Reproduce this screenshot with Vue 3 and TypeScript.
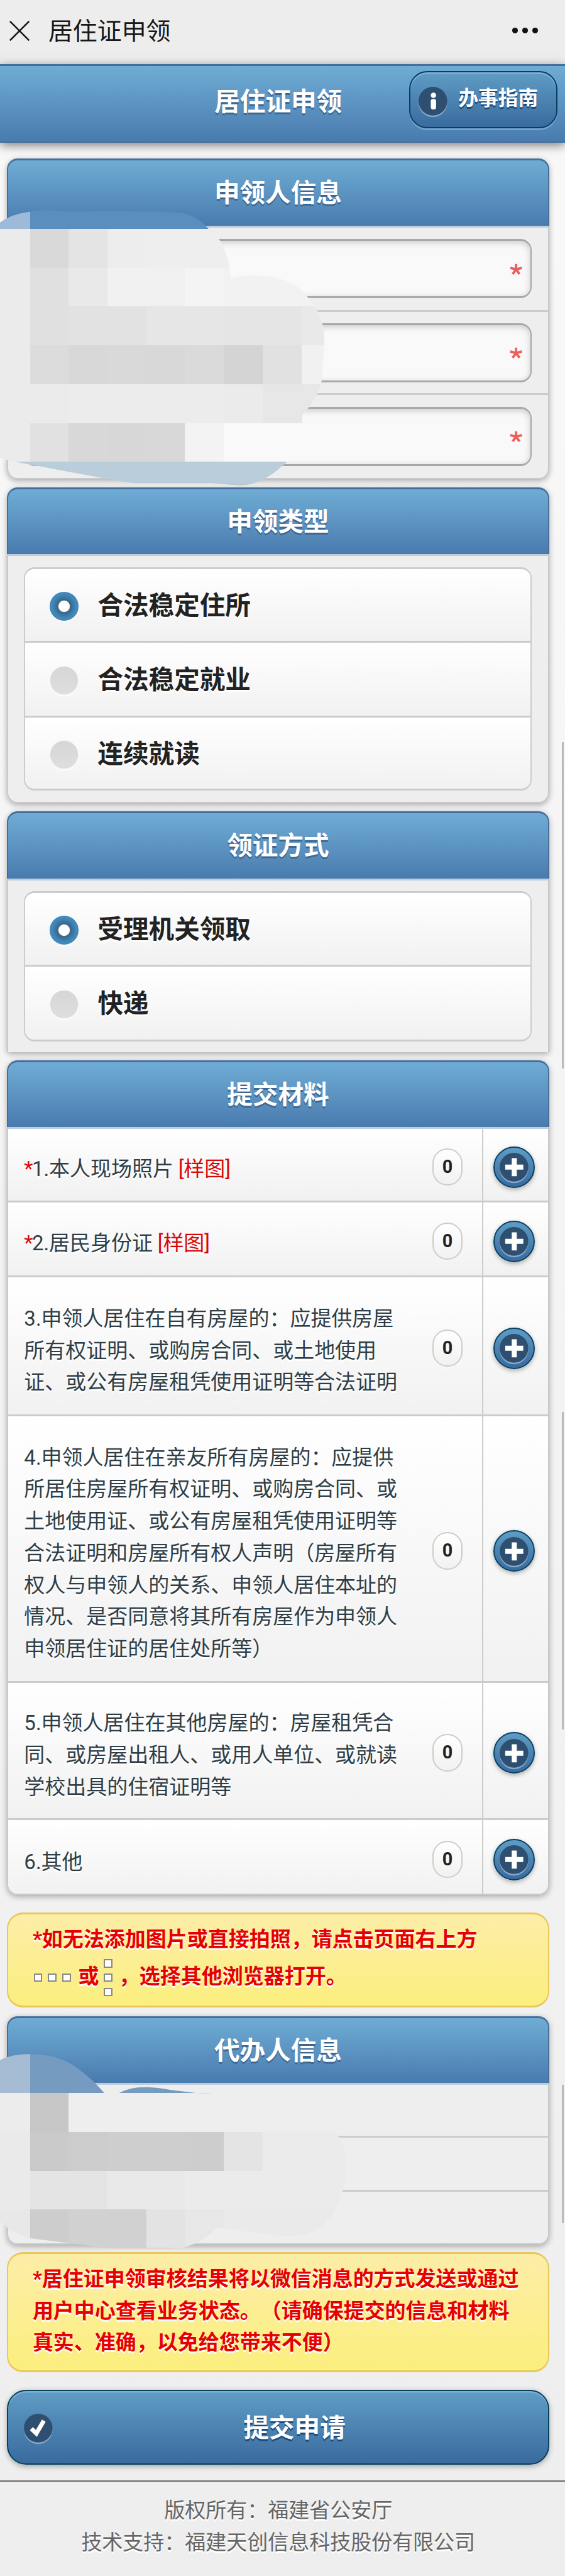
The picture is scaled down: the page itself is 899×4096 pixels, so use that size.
<script setup lang="ts">
import { ref } from 'vue'

interface Material {
  required: boolean
  lines: string[]
  sample: boolean
  count: number
  size: string
}

interface Cell {
  x: number
  y: number
  w: number
  fill: string
}

const applyTypes: string[] = ['合法稳定住所', '合法稳定就业', '连续就读']
const pickupWays: string[] = ['受理机关领取', '快递']
const applyType = ref(0)
const pickupWay = ref(0)

const materials = ref<Material[]>([
  { required: true, lines: ['1.本人现场照片'], sample: true, count: 0, size: 'single' },
  { required: true, lines: ['2.居民身份证'], sample: true, count: 0, size: 'single-tall' },
  {
    required: false,
    lines: ['3.申领人居住在自有房屋的：应提供房屋', '所有权证明、或购房合同、或土地使用', '证、或公有房屋租凭使用证明等合法证明'],
    sample: false,
    count: 0,
    size: 'triple-tall',
  },
  {
    required: false,
    lines: [
      '4.申领人居住在亲友所有房屋的：应提供',
      '所居住房屋所有权证明、或购房合同、或',
      '土地使用证、或公有房屋租凭使用证明等',
      '合法证明和房屋所有权人声明（房屋所有',
      '权人与申领人的关系、申领人居住本址的',
      '情况、是否同意将其所有房屋作为申领人',
      '申领居住证的居住处所等）',
    ],
    sample: false,
    count: 0,
    size: 'long',
  },
  {
    required: false,
    lines: ['5.申领人居住在其他房屋的：房屋租凭合', '同、或房屋出租人、或用人单位、或就读', '学校出具的住宿证明等'],
    sample: false,
    count: 0,
    size: 'triple',
  },
  { required: false, lines: ['6.其他'], sample: false, count: 0, size: 'single' },
])

const resultNotice: string[] = [
  '*居住证申领审核结果将以微信消息的方式发送或通过',
  '用户中心查看业务状态。（请确保提交的信息和材料',
  '真实、准确，以免给您带来不便）',
]

const COLS = [0, 56.3, 129, 202, 275, 348, 421, 494, 567, 680]

function toCells(rows: string[], top: number): Cell[] {
  return rows.flatMap((row, r) => {
    const tones = row.split(' ')
    return tones.map((tone, c) => ({
      x: COLS[c],
      y: top + r * 73,
      w: (c === tones.length - 1 ? 680 : COLS[c + 1]) - COLS[c],
      fill: '#' + tone + tone + tone,
    }))
  })
}

const applicantMask = toCells(
  [
    'eb d9 e4 ed ee',
    'eb e0 e9 f1 f0 f4 f2',
    'eb e0 e2 e2 e6 e6 e5 e5 e9',
    'eb dc d8 d9 d8 da d4 e1 f1',
    'eb eb ec ec ec ec eb e7',
    'eb e1 d8 d7 d8 f3 f9',
  ],
  430,
)
const agentMask = toCells(
  ['ec c7 ee', 'ea ca cc ce ce cd e4 eb', 'ea e4 e4 e9 e9 eb', 'e8 cd d1 d1 e3 e7 ea'],
  3934,
)
</script>

<template>
  <div class="page">
    <div class="topbar">
      <svg class="close" viewBox="0 0 38 38"><path d="M1 1 37 37M37 1 1 37" /></svg>
      <span class="topbar-title">居住证申领</span>
      <span class="dots"><i></i><i></i><i></i></span>
    </div>

    <header class="header">
      <span></span>
      <h1 class="title">居住证申领</h1>
      <button class="guide" type="button">
        <svg class="disc" viewBox="0 0 54 58">
          <circle cx="27" cy="30" r="27" class="disc-rim" />
          <circle cx="27" cy="27" r="27" class="disc-fill" />
          <circle cx="28" cy="16" r="5" fill="#fff" />
          <rect x="23" y="23" width="10" height="19.500" rx="4" fill="#fff" />
        </svg>
        <span>办事指南</span>
      </button>
    </header>

    <section class="card applicant">
      <h2 class="band">申领人信息</h2>
      <div class="body">
        <div v-for="n in 3" :key="n" class="field">
          <div class="input"><svg class="star" viewBox="0 0 24 22"><path d="M12 1V11M1 8 12 11M23 8 12 11M5.500 20 12 11M18.500 20 12 11" /></svg></div>
        </div>
      </div>
      <svg class="mask" viewBox="0 390 680 530">
        <defs>
          <clipPath id="applicant-blob">
            <path d="M0 418Q22 402 56 398Q80 392 122 398Q220 396 319 398.500C345 398 372 405 392 430L413 451Q431 478 434 524Q455 516 482 518C520 518 560 530 580 560L597 584Q612 612 610 650L605 716L597 740L580 767L569 778V796Q565 840 540 868L520 885Q480 916 444 912L400 908H251L190 898L24 867L0 861Z" />
          </clipPath>
        </defs>
        <g clip-path="url(#applicant-blob)" shape-rendering="crispEdges">
          <rect x="0" y="390" width="57" height="41" fill="#9dbad8" />
          <rect x="56.300" y="390" width="400" height="41" fill="#5a8ebe" />
          <rect v-for="(c, i) in applicantMask" :key="i" :x="c.x" :y="c.y" :width="c.w" height="73.500" :fill="c.fill" />
          <rect x="0" y="868" width="600" height="60" fill="#bacdda" />
        </g>
      </svg>
    </section>

    <section class="card types">
      <h2 class="band">申领类型</h2>
      <div class="body">
        <div class="options">
          <label v-for="(t, i) in applyTypes" :key="t" class="option" @click="applyType = i">
            <i class="radio" :class="{ on: applyType === i }"></i><span>{{ t }}</span>
          </label>
        </div>
      </div>
    </section>

    <section class="card ways">
      <h2 class="band">领证方式</h2>
      <div class="body">
        <div class="options">
          <label v-for="(t, i) in pickupWays" :key="t" class="option" @click="pickupWay = i">
            <i class="radio" :class="{ on: pickupWay === i }"></i><span>{{ t }}</span>
          </label>
        </div>
      </div>
    </section>

    <section class="card materials">
      <h2 class="band">提交材料</h2>
      <div class="body">
        <div v-for="(m, i) in materials" :key="i" class="material" :class="m.size">
          <div class="material-main">
            <div class="material-text">
              <div v-for="(line, k) in m.lines" :key="k" class="line"><span v-if="m.required" class="red required">*</span>{{ line }}<span v-if="m.sample" class="red sample">[样图]</span></div>
            </div>
            <span class="count">{{ m.count }}</span>
          </div>
          <div class="material-add">
            <button class="add" type="button" @click="m.count++">
              <svg viewBox="0 0 54 58">
                <circle cx="27" cy="30" r="27" class="disc-rim" />
                <circle cx="27" cy="27" r="27" class="disc-fill" />
                <path d="M27.500 10V44M10.500 27H44.500" stroke="#fff" stroke-width="9.500" />
              </svg>
            </button>
          </div>
        </div>
      </div>
    </section>

    <div class="notice notice-browser">
      <div class="line">*如无法添加图片或直接拍照，请点击页面右上方</div>
      <div class="menu-line">
        <span class="squares"><i></i><i></i><i></i></span>
        <span>或</span>
        <span class="squares vertical"><i></i><i></i><i></i></span>
        <span>，选择其他浏览器打开。</span>
      </div>
    </div>

    <section class="card agent">
      <h2 class="band">代办人信息</h2>
      <div class="body">
        <div v-for="n in 3" :key="n" class="field"></div>
      </div>
      <svg class="mask" viewBox="0 3850 680 380">
        <defs>
          <clipPath id="agent-blob">
            <path d="M0 3872Q25 3860 56 3861Q80 3861 102 3866Q130 3874 149 3890Q178 3912 196 3934H224Q245 3922 278 3923Q300 3924 320 3928L369 3934Q440 3935 494 3953Q590 3970 634 4012Q655 4045 651 4075Q650 4110 637 4138Q612 4205 536 4203Q515 4202 490 4198L370 4182Q395 4187 407 4187Q385 4215 340 4226H209L129 4216L56 4207Q20 4195 14 4187L0 4177Z" />
          </clipPath>
        </defs>
        <g clip-path="url(#agent-blob)" shape-rendering="crispEdges">
          <rect x="0" y="3850" width="57" height="85" fill="#a6bbd4" />
          <rect x="56.300" y="3850" width="350" height="85" fill="#769bc1" />
          <rect v-for="(c, i) in agentMask" :key="i" :x="c.x" :y="c.y" :width="c.w" height="73.500" :fill="c.fill" />
          <rect x="209" y="4225" width="119" height="2" fill="#f3b7a8" />
        </g>
      </svg>
    </section>

    <div class="notice notice-result">
      <div v-for="line in resultNotice" :key="line" class="line">{{ line }}</div>
    </div>

    <button class="submit" type="button">
      <svg class="disc" viewBox="0 0 54 58">
        <circle cx="27" cy="30" r="27" class="disc-rim" />
        <circle cx="27" cy="27" r="27" class="disc-fill" />
        <path d="M14 28 23.500 37 37.500 13" fill="none" stroke="#fff" stroke-width="8" />
      </svg>
      <span>提交申请</span>
    </button>

    <footer class="footer">
      <div>版权所有：福建省公安厅</div>
      <div>技术支持：福建天创信息科技股份有限公司</div>
    </footer>

    <i class="thumb first"></i>
    <i class="thumb second"></i>
    <i class="thumb third"></i>
  </div>
</template>

<style>
html {
  font-size: 8.459px;
  background: #eee;
}
body {
  margin: 0;
}
</style>

<style scoped>
.page,
.page * {
  box-sizing: border-box;
}
.page {
  position: relative;
  width: 100%;
  height: 484.2rem;
  overflow: hidden;
  background: linear-gradient(#f9f9f9, #eee);
  font-family: Roboto, 'Noto Sans CJK SC', sans-serif;
  font-size: 3.9rem;
  line-height: 6rem;
  white-space: nowrap;
  text-spacing-trim: space-all;
}
i {
  display: block;
}
h1,
h2 {
  margin: 0;
}
button {
  padding: 0;
  font: inherit;
}
.topbar {
  display: flex;
  align-items: center;
  height: 12.1rem;
  padding: 0 5.1rem 0.6rem 1.8rem;
  background: #ededed;
  color: #181818;
}
.close {
  width: 3.8rem;
  height: 3.8rem;
  stroke: #181818;
  stroke-width: 3;
}
.topbar-title {
  flex: 1;
  margin: 0.5rem 0 0 3.5rem;
  font-size: 4.6rem;
}
.dots {
  display: flex;
  gap: 0.9rem;
}
.dots i {
  width: 1rem;
  height: 1rem;
  border-radius: 50%;
  background: #111;
}
.header {
  display: grid;
  grid-template-columns: 1fr auto 1fr;
  align-items: center;
  height: 14.7rem;
  padding-right: 1.6rem;
  border: solid #456f9a;
  border-width: 0.36rem 0 0.24rem;
  background: linear-gradient(#6facd5, #497bae);
  box-shadow: 0 0.5rem 1.8rem rgba(0, 0, 0, 0.5);
}
.title,
.band {
  color: #fff;
  font-size: 4.8rem;
  font-weight: 700;
  text-align: center;
  text-shadow: 0 0.3rem 0 #3e6790;
}
.title {
  padding-bottom: 0.6rem;
}
.guide {
  display: flex;
  align-items: center;
  justify-self: end;
  width: 27.9rem;
  height: 10.8rem;
  margin: -1.5rem -0.2rem 0 0;
  padding: 0 0 0 1.5rem;
  border: 0.3rem solid #044062;
  border-radius: 3.4rem;
  background: linear-gradient(#5f9cc5, #396b9e);
  box-shadow: inset 0 0.3rem 0 #85b3d4, 0 0.35rem 0 #74a5cd;
  color: #fff;
  font-size: 3.75rem;
  font-weight: 700;
  text-shadow: 0 0.3rem 0 #194b7e;
}
.guide .disc {
  margin-top: 0.9rem;
}
.guide span {
  margin: 0 0 0.2rem 2.1rem;
}
.disc {
  flex: none;
  width: 5.4rem;
  height: 5.8rem;
  overflow: visible;
}
.disc-rim {
  fill: #86a9cd;
}
.disc-fill {
  fill: #2e4f6f;
}
.card {
  position: relative;
  width: 102rem;
  margin-left: 1.3rem;
  border-radius: 2rem;
  box-shadow: 0 0.3rem 1.1rem rgba(0, 0, 0, 0.3);
}
.band {
  height: 12.6rem;
  border: 0.3rem solid #456f9a;
  border-top-width: 0.36rem;
  border-bottom: 0;
  border-radius: 2rem 2rem 0 0;
  background: linear-gradient(#6facd5, #497bae);
  line-height: 12.3rem;
}
.body {
  border: 0.3rem solid #c8c8c8;
  border-top: 0.36rem solid #bccddc;
  border-radius: 0 0 2rem 2rem;
  background: #eee;
  overflow: hidden;
}
.applicant {
  height: 60.3rem;
  margin-top: 3rem;
}
.applicant .body {
  height: 47.7rem;
}
.field {
  padding: 0 3rem;
  border-bottom: 0.36rem solid #ccc;
}
.applicant .field {
  display: grid;
  align-items: center;
  height: 15.6rem;
}
.applicant .field:first-child {
  height: 15.9rem;
}
.field:last-child {
  border-bottom: 0;
}
.input {
  display: flex;
  align-items: center;
  justify-content: flex-end;
  height: 11.1rem;
  padding-right: 1.6rem;
  border: 0.3rem solid #a8a8a8;
  border-top-width: 0.36rem;
  border-bottom-width: 0.36rem;
  border-radius: 2.1rem;
  background: #f9f9f9;
  box-shadow: inset 0 0.3rem 1.2rem rgba(0, 0, 0, 0.2);
}
.star {
  width: 2.4rem;
  height: 2.2rem;
  margin-top: 0.1rem;
  fill: none;
  stroke: #ec5f5f;
  stroke-width: 4.6;
}
.mask {
  position: absolute;
  left: -1.3rem;
  width: 68rem;
}
.applicant .mask {
  top: 9.2rem;
  height: 53rem;
}
.agent .mask {
  top: 6rem;
  height: 38rem;
}
.types {
  height: 59.4rem;
  margin-top: 1.5rem;
}
.types .body {
  height: 46.8rem;
  padding: 2.1rem 3rem;
}
.options {
  height: 42rem;
  border: 0.3rem solid #ccc;
  border-top-width: 0.36rem;
  border-bottom-width: 0.36rem;
  border-radius: 2rem;
  overflow: hidden;
}
.option {
  display: flex;
  align-items: center;
  height: 14.1rem;
  padding: 0 0 0 4.6rem;
  border-bottom: 0.36rem solid #ccc;
  background: linear-gradient(#fff, #f1f1f1);
  color: #222;
  font-size: 4.8rem;
  font-weight: 700;
  text-shadow: 0 0.3rem 0 #fff;
}
.option span {
  margin-top: 0.3rem;
}
.option:first-child {
  height: 13.8rem;
}
.option:last-child {
  height: 13.5rem;
  border-bottom: 0;
}
.radio {
  width: 5.4rem;
  height: 5.4rem;
  margin: 0.4rem 3.6rem 0 0;
  border: 0.15rem solid #f4f4f4;
  border-radius: 50%;
  background: linear-gradient(#d6d6d6, #dedede);
  box-shadow: 0 0.3rem 0.3rem #fafafa;
}
.radio.on {
  border: 0;
  background: radial-gradient(circle, #fff 0, #fff 1rem, #3a6583 1.15rem, #3b7ba8 1.8rem, #4289bb 2.3rem);
}
.ways {
  height: 45.3rem;
  margin-top: 1.5rem;
  border-radius: 2rem 2rem 0.6rem 0.6rem;
}
.ways .body {
  height: 32.7rem;
  padding: 2.1rem 3rem;
  border-bottom: 0;
  border-radius: 0;
}
.ways .options {
  height: 28.2rem;
}
.ways .option:last-child {
  height: 13.8rem;
}
.materials {
  height: 156.9rem;
  margin-top: 1.5rem;
}
.materials .body {
  height: 144.3rem;
}
.material {
  display: flex;
  border-bottom: 0.36rem solid #ccc;
  background: linear-gradient(#fff, #f1f1f1);
}
.single {
  height: 13.8rem;
}
.single-tall {
  height: 14.1rem;
}
.triple {
  height: 25.8rem;
}
.triple-tall {
  height: 26.1rem;
}
.long {
  height: 50.1rem;
}
.material:last-child {
  height: 14rem;
  border-bottom: 0;
}
.material-main {
  display: flex;
  flex: 1;
  align-items: center;
  padding: 0.8rem 3.6rem 0 3rem;
  border-right: 0.3rem solid #ccc;
}
.material-text {
  position: relative;
  top: 0.5rem;
  flex: 1;
  color: #2f3e46;
  text-shadow: 0 0.3rem 0 #fff;
}
.line {
  height: 6rem;
}
.red {
  color: #d8080a;
}
.required {
  letter-spacing: -0.2rem;
}
.sample {
  margin-left: 0.9rem;
}
.count {
  width: 5.7rem;
  height: 7rem;
  border: 0.3rem solid #ccc;
  border-radius: 2.8rem;
  background: linear-gradient(#fff, #f1f1f1);
  color: #222;
  font-size: 3.4rem;
  font-weight: 700;
  line-height: 6.4rem;
  text-align: center;
}
.material-add {
  display: grid;
  place-items: center;
  width: 12.2rem;
  padding: 0.9rem 0.6rem 0 0;
}
.add {
  display: grid;
  place-items: center;
  width: 7.8rem;
  height: 7.8rem;
  border: 0.3rem solid #044062;
  border-radius: 50%;
  background: linear-gradient(#5f9cc5, #396b9e);
  box-shadow: 0 0.3rem 0.9rem rgba(0, 0, 0, 0.3);
}
.add svg {
  width: 5.4rem;
  height: 5.8rem;
  margin-top: 0.4rem;
}
.notice {
  width: 102rem;
  margin-left: 1.3rem;
  padding: 1.8rem 4.6rem;
  border: 0.3rem solid #ebc658;
  border-top-width: 0.36rem;
  border-bottom-width: 0.36rem;
  border-radius: 3rem;
  background: linear-gradient(#fceda7, #fbef7e);
  color: #e60000;
  font-weight: 700;
  text-shadow: 0 0.3rem 0 #fff;
}
.notice-browser {
  height: 17.9rem;
  margin-top: 3.3rem;
}
.menu-line {
  display: flex;
  align-items: center;
  height: 8.4rem;
}
.menu-line span {
  position: relative;
  top: -0.3rem;
}
.menu-line .squares {
  top: -0.1rem;
  display: flex;
  gap: 1.1rem;
  margin: 0 1.4rem 0 0.2rem;
}
.menu-line .vertical {
  flex-direction: column;
  margin: 0 1.2rem 0 0.9rem;
}
.squares i {
  width: 1.6rem;
  height: 1.6rem;
  border: 0.3rem solid #888;
  background: #fff;
}
.agent {
  height: 42.9rem;
  margin-top: 1.6rem;
}
.agent .body {
  height: 30.3rem;
}
.agent .field {
  height: 10.2rem;
}
.agent .field:first-child {
  height: 9.9rem;
}
.notice-result {
  height: 22.6rem;
  margin-top: 1.4rem;
}
.submit {
  display: flex;
  align-items: center;
  width: 102rem;
  height: 14.1rem;
  margin: 3.3rem 0 0 1.3rem;
  padding: 0 2.2rem 0 3rem;
  border: 0.3rem solid #044062;
  border-radius: 3.6rem;
  background: linear-gradient(#5f9cc5, #396b9e);
  box-shadow: inset 0 0.3rem 0 #7fb0d3, 0 0.3rem 1rem rgba(0, 0, 0, 0.3);
  color: #fff;
  font-size: 4.8rem;
  font-weight: 700;
  text-shadow: 0 0.3rem 0 #194b7e;
}
.submit .disc {
  margin-top: 0.8rem;
}
.submit span {
  flex: 1;
  padding-top: 0.4rem;
  text-align: center;
}
.footer {
  height: 17.9rem;
  margin-top: 3rem;
  padding: 2.5rem 1.6rem 0 0;
  border-top: 0.3rem solid #666;
  background: #eee;
  color: #666;
  text-align: center;
  text-shadow: 0 0.3rem 0 #fff;
}
.thumb {
  position: absolute;
  right: 0.2rem;
  width: 0.35rem;
  background: #b9b9b9;
}
.first {
  top: 139.5rem;
  height: 61.4rem;
}
.second {
  top: 265.4rem;
  height: 59.7rem;
}
.third {
  top: 391.9rem;
  height: 26rem;
}
</style>
